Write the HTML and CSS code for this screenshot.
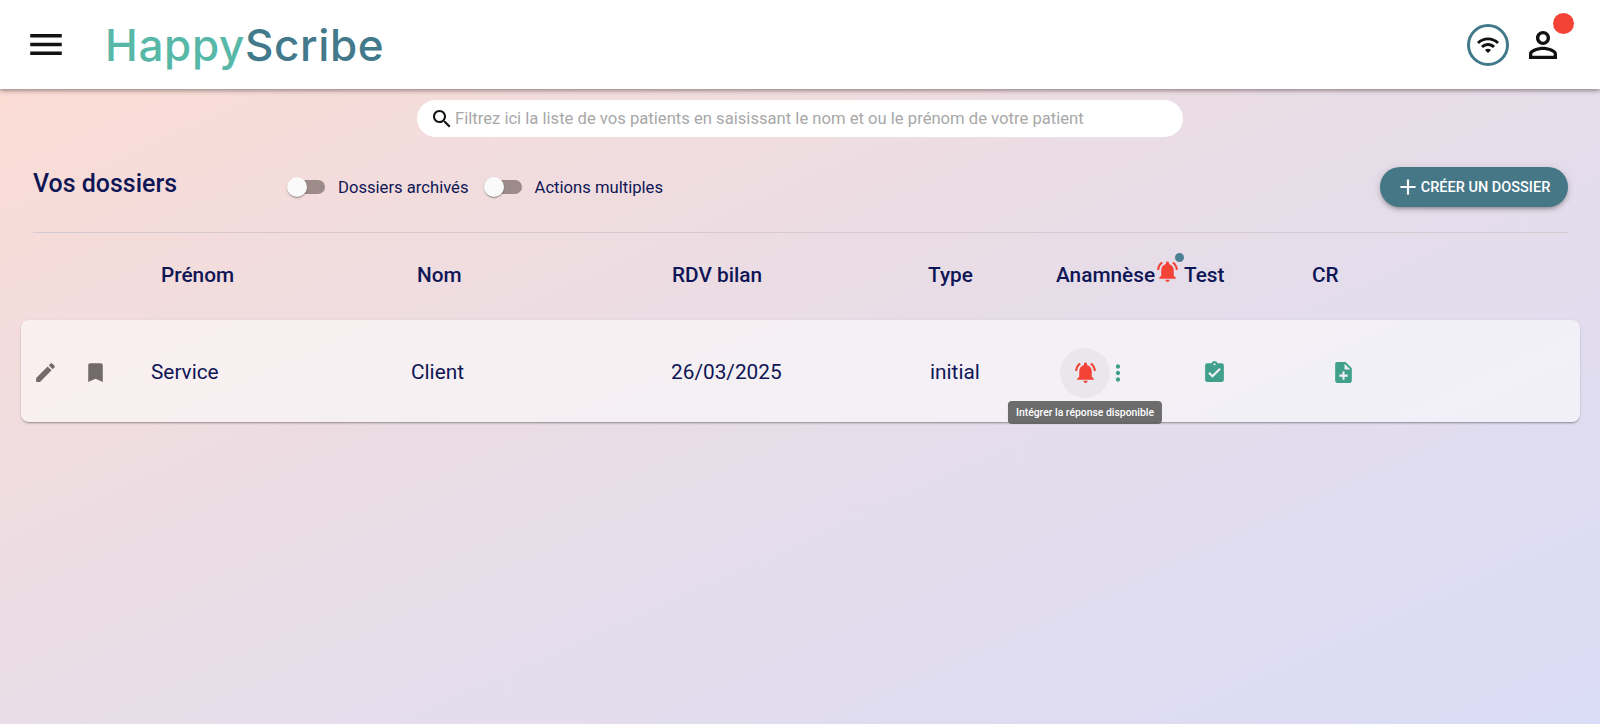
FILE: index.html
```html
<!DOCTYPE html>
<html lang="fr">
<head>
<meta charset="utf-8">
<title>HappyScribe</title>
<link rel="stylesheet" href="styles.css">
</head>
<body>
<header class="topbar">
  <svg class="ico-menu" viewBox="0 0 24 24"><path d="M3 18h18v-2H3v2zm0-5h18v-2H3v2zm0-7v2h18V6H3z"/></svg>
  <div class="logo"><span class="logo-a">Happy</span><span class="logo-b">Scribe</span></div>
  <div class="top-right">
    <div class="wifi"><svg viewBox="0 0 24 24"><path d="M1 9l2 2c4.97-4.97 13.03-4.97 18 0l2-2C16.93 2.93 7.08 2.93 1 9zm8 8l3 3 3-3c-1.65-1.66-4.34-1.66-6 0zm-4-4l2 2c2.76-2.76 7.24-2.76 10 0l2-2C15.14 9.14 8.87 9.14 5 13z"/></svg></div>
    <div class="user">
      <svg viewBox="0 0 24 24"><path d="M12 5.9c1.16 0 2.1.94 2.1 2.1s-.94 2.1-2.1 2.1S9.9 9.16 9.9 8s.94-2.1 2.1-2.1m0 9c2.97 0 6.1 1.46 6.1 2.1v1.1H5.9V17c0-.64 3.13-2.1 6.1-2.1M12 4C9.79 4 8 5.79 8 8s1.79 4 4 4 4-1.79 4-4-1.79-4-4-4zm0 9c-2.67 0-8 1.34-8 4v3h16v-3c0-2.66-5.33-4-8-4z"/></svg>
      <span class="user-badge"></span>
    </div>
  </div>
</header>

<main class="content">
  <div class="search">
    <svg viewBox="0 0 24 24"><path d="M15.5 14h-.79l-.28-.27C15.41 12.59 16 11.11 16 9.5 16 5.91 13.09 3 9.5 3S3 5.91 3 9.5 5.91 16 9.5 16c1.61 0 3.09-.59 4.23-1.57l.27.28v.79l5 4.99L20.49 19l-4.99-5zm-6 0C7.01 14 5 11.99 5 9.5S7.01 5 9.5 5 14 7.01 14 9.5 11.99 14 9.5 14z"/></svg>
    <span class="search-text">Filtrez ici la liste de vos patients en saisissant le nom et ou le prénom de votre patient</span>
  </div>

  <section class="toolbar">
    <h1 class="title">Vos dossiers</h1>
    <div class="toggles">
      <div class="toggle"><span class="switch"><span class="thumb"></span></span><span class="toggle-label">Dossiers archivés</span></div>
      <div class="toggle"><span class="switch"><span class="thumb"></span></span><span class="toggle-label">Actions multiples</span></div>
    </div>
    <button class="create">
      <svg viewBox="0 0 24 24"><path d="M19 13h-6v6h-2v-6H5v-2h6V5h2v6h6v2z"/></svg>
      <span>CRÉER UN DOSSIER</span>
    </button>
  </section>

  <div class="columns">
    <span></span>
    <span>Prénom</span>
    <span>Nom</span>
    <span>RDV bilan</span>
    <span>Type</span>
    <span class="col-ana">Anamnèse
      <span class="col-alert">
        <svg viewBox="0 0 24 24"><path d="M7.58 4.08L6.15 2.65C3.75 4.48 2.17 7.3 2.03 10.5h2c.15-2.65 1.51-4.97 3.55-6.42zm12.39 6.42h2c-.15-3.2-1.73-6.02-4.12-7.85l-1.42 1.43c2.02 1.45 3.39 3.77 3.54 6.42zM18 11c0-3.07-1.64-5.64-4.5-6.32V4c0-.83-.67-1.5-1.5-1.5s-1.5.67-1.5 1.5v.68C7.63 5.36 6 7.92 6 11v5l-2 2v1h16v-1l-2-2v-5zm-6 11c.14 0 .27-.01.4-.04.65-.14 1.18-.58 1.44-1.18.1-.24.15-.5.15-.78h-4c.01 1.1.9 2 2.01 2z"/></svg>
        <i class="col-dot"></i>
      </span>
    </span>
    <span>Test</span>
    <span>CR</span>
  </div>

  <article class="card">
    <div class="actions">
      <svg class="ico-gray" viewBox="0 0 24 24"><path d="M3 17.25V21h3.75L17.81 9.94l-3.75-3.75L3 17.25zM20.71 7.04c.39-.39.39-1.02 0-1.41l-2.34-2.34a.9959.9959 0 00-1.41 0l-1.83 1.83 3.75 3.75 1.83-1.83z"/></svg>
      <svg class="ico-gray" viewBox="0 0 24 24"><path d="M17 3H7c-1.1 0-1.99.9-1.99 2L5 21l7-3 7 3V5c0-1.1-.9-2-2-2z"/></svg>
    </div>
    <span class="val">Service</span>
    <span class="val">Client</span>
    <span class="val">26/03/2025</span>
    <span class="val val-type">initial</span>
    <div class="cell-ana">
      <span class="bell-btn">
        <svg viewBox="0 0 24 24"><path d="M7.58 4.08L6.15 2.65C3.75 4.48 2.17 7.3 2.03 10.5h2c.15-2.65 1.51-4.97 3.55-6.42zm12.39 6.42h2c-.15-3.2-1.73-6.02-4.12-7.85l-1.42 1.43c2.02 1.45 3.39 3.77 3.54 6.42zM18 11c0-3.07-1.64-5.64-4.5-6.32V4c0-.83-.67-1.5-1.5-1.5s-1.5.67-1.5 1.5v.68C7.63 5.36 6 7.92 6 11v5l-2 2v1h16v-1l-2-2v-5zm-6 11c.14 0 .27-.01.4-.04.65-.14 1.18-.58 1.44-1.18.1-.24.15-.5.15-.78h-4c.01 1.1.9 2 2.01 2z"/></svg>
        <span class="tooltip">Intégrer la réponse disponible</span>
      </span>
      <svg class="ico-more" viewBox="0 0 24 24"><path d="M12 8c1.1 0 2-.9 2-2s-.9-2-2-2-2 .9-2 2 .9 2 2 2zm0 2c-1.1 0-2 .9-2 2s.9 2 2 2 2-.9 2-2-.9-2-2-2zm0 6c-1.1 0-2 .9-2 2s.9 2 2 2 2-.9 2-2-.9-2-2-2z"/></svg>
    </div>
    <div class="cell-ico"><svg class="ico-green" viewBox="0 0 24 24"><path d="M19 3h-4.18C14.4 1.84 13.3 1 12 1c-1.3 0-2.4.84-2.82 2H5c-1.1 0-2 .9-2 2v14c0 1.1.9 2 2 2h14c1.1 0 2-.9 2-2V5c0-1.1-.9-2-2-2zm-7 0c.55 0 1 .45 1 1s-.45 1-1 1-1-.45-1-1 .45-1 1-1zm-2 14l-4-4 1.41-1.41L10 14.17l6.59-6.59L18 9l-8 8z"/></svg></div>
    <div class="cell-ico"><svg class="ico-green" viewBox="0 0 24 24"><path d="M14 2H6c-1.1 0-1.99.9-1.99 2L4 20c0 1.1.89 2 1.99 2H18c1.1 0 2-.9 2-2V8l-6-6zm2 14h-3v3h-2v-3H8v-2h3v-3h2v3h3v2zm-3-7V3.5L18.5 9H13z"/></svg></div>
  </article>
</main>
</body>
</html>
```

FILE: styles.css
```css
* { box-sizing: border-box; }
html, body { margin: 0; height: 724px; overflow: hidden; }
body {
  font-family: Roboto, "Liberation Sans", sans-serif;
  color: #0f1655;
  background: linear-gradient(to bottom right, #fddcd2 0%, #e6dde9 55%, #dbdcf7 100%);
}
svg { display: block; fill: currentColor; }

.topbar {
  height: 89px;
  background: #fff;
  box-shadow: 0 2px 4px rgba(60, 40, 40, .45);
  display: flex;
  align-items: center;
  padding-left: 25px;
  position: relative;
}
.ico-menu { width: 42px; height: 43px; color: #111; }
.logo {
  margin-left: 38px;
  font-family: Inter, "Open Sans", sans-serif;
  font-weight: 450;
  font-size: 44px;
  letter-spacing: .65px;
  line-height: 1;
}
.logo-a { color: #57b8a8; }
.logo-b { color: #437a8b; }
.top-right {
  margin-left: auto;
  display: flex;
  align-items: center;
  gap: 13px;
  padding-right: 36px;
}
.wifi {
  width: 42px; height: 42px;
  border: 3px solid #437a8b;
  border-radius: 50%;
  display: flex; align-items: center; justify-content: center;
  color: #111;
}
.wifi svg { width: 24px; height: 24px; }
.user { position: relative; width: 42px; height: 42px; color: #111; }
.user svg { width: 42px; height: 42px; }
.user-badge {
  position: absolute; left: 31px; top: -11px;
  width: 21px; height: 21px; border-radius: 50%;
  background: #f44336;
}

.content { padding: 11px 0 0; }
.search {
  width: 766px; height: 37px;
  margin-left: 417px;
  background: #fff;
  border-radius: 19px;
  display: flex; align-items: center;
  padding-left: 13px;
  gap: 1px;
  color: #111;
}
.search svg { width: 24px; height: 24px; }
.search-text { color: #a8a8a8; font-size: 16.64px; }

.toolbar {
  display: flex;
  align-items: center;
  margin: 30px 32px 0 33px;
  height: 40px;
  position: relative;
}
.title { margin: -7px 0 0; font-size: 24.96px; font-weight: 500; width: 254px; }
.toggles { display: flex; gap: 15px; }
.toggle { display: flex; align-items: center; gap: 13px; }
.switch {
  position: relative; display: block;
  width: 38px; height: 14px;
}
.switch::before {
  content: ""; position: absolute; right: 0; top: 0;
  width: 30px; height: 14px; border-radius: 7px;
  background: #9c8b89;
}
.thumb {
  position: absolute; left: 0; top: -3px;
  width: 20px; height: 20px; border-radius: 50%;
  background: #fafafa;
  box-shadow: 0 2px 1px -1px rgba(0,0,0,.2), 0 1px 1px rgba(0,0,0,.14), 0 1px 3px rgba(0,0,0,.12);
}
.toggle-label { font-size: 16.64px; }
.create {
  margin-left: auto;
  width: 188px; height: 40px;
  border: 0; border-radius: 20px;
  padding: 0 3px 0 0;
  background: #457787; color: #fff;
  display: flex; align-items: center; justify-content: center; gap: 0;
  font: 500 14.5px Roboto, sans-serif;
  box-shadow: 0 3px 3px -2px rgba(0,0,0,.2), 0 3px 4px rgba(0,0,0,.14), 0 1px 8px rgba(0,0,0,.12);
}
.create svg { width: 26px; height: 26px; }

.columns {
  margin: 25px 32px 0 33px;
  border-top: 1px solid #d5c9cf;
  display: grid;
  grid-template-columns: 128px 256px 255px 256px 128px 128px 128px 1fr;
  align-items: center;
  height: 88px;
  padding-bottom: 4px;
  font-size: 20.8px; font-weight: 500;
}
.col-ana { position: relative; white-space: nowrap; }
.col-alert { position: absolute; left: 99px; top: -4px; color: #f44336; }
.col-alert svg { width: 25px; height: 25px; }
.col-dot {
  position: absolute; left: 20px; top: -6px;
  width: 9px; height: 9px; border-radius: 50%;
  background: #4b8090;
}

.card {
  margin: 0 20px 0 21px;
  height: 102px;
  padding-top: 3px;
  background: rgba(255,255,255,.55);
  border-radius: 8px;
  box-shadow: 0 2px 2px -1px rgba(0,0,0,.3), 0 1px 3px rgba(0,0,0,.12);
  display: grid;
  grid-template-columns: 130px 260px 260px 259px 130px 142px 129px 1fr;
  align-items: center;
}
.actions { display: flex; gap: 25px; padding-left: 12px; color: #736b6b; }
.ico-gray { width: 25px; height: 25px; }
.val { font-size: 20.8px; margin-top: -2px; }
.cell-ana { display: flex; align-items: center; }
.bell-btn {
  position: relative;
  width: 50px; height: 50px;
  border-radius: 50%;
  background: rgba(0,0,0,.04);
  color: #f44336;
  display: flex; align-items: center; justify-content: center;
}
.bell-btn svg { width: 25px; height: 25px; }
.tooltip {
  position: absolute; left: 50%; top: 53px;
  transform: translateX(-50%);
  white-space: nowrap;
  background: rgba(97,97,97,.92);
  color: #fff;
  font-size: 10.4px; font-weight: 500;
  padding: 0 8px;
  height: 23px; line-height: 23px;
  border-radius: 4px;
}
.ico-more { width: 26px; height: 26px; color: #41a08c; margin-left: -5px; }
.cell-ico { color: #41a08c; }
.ico-green { width: 25px; height: 25px; }
```
